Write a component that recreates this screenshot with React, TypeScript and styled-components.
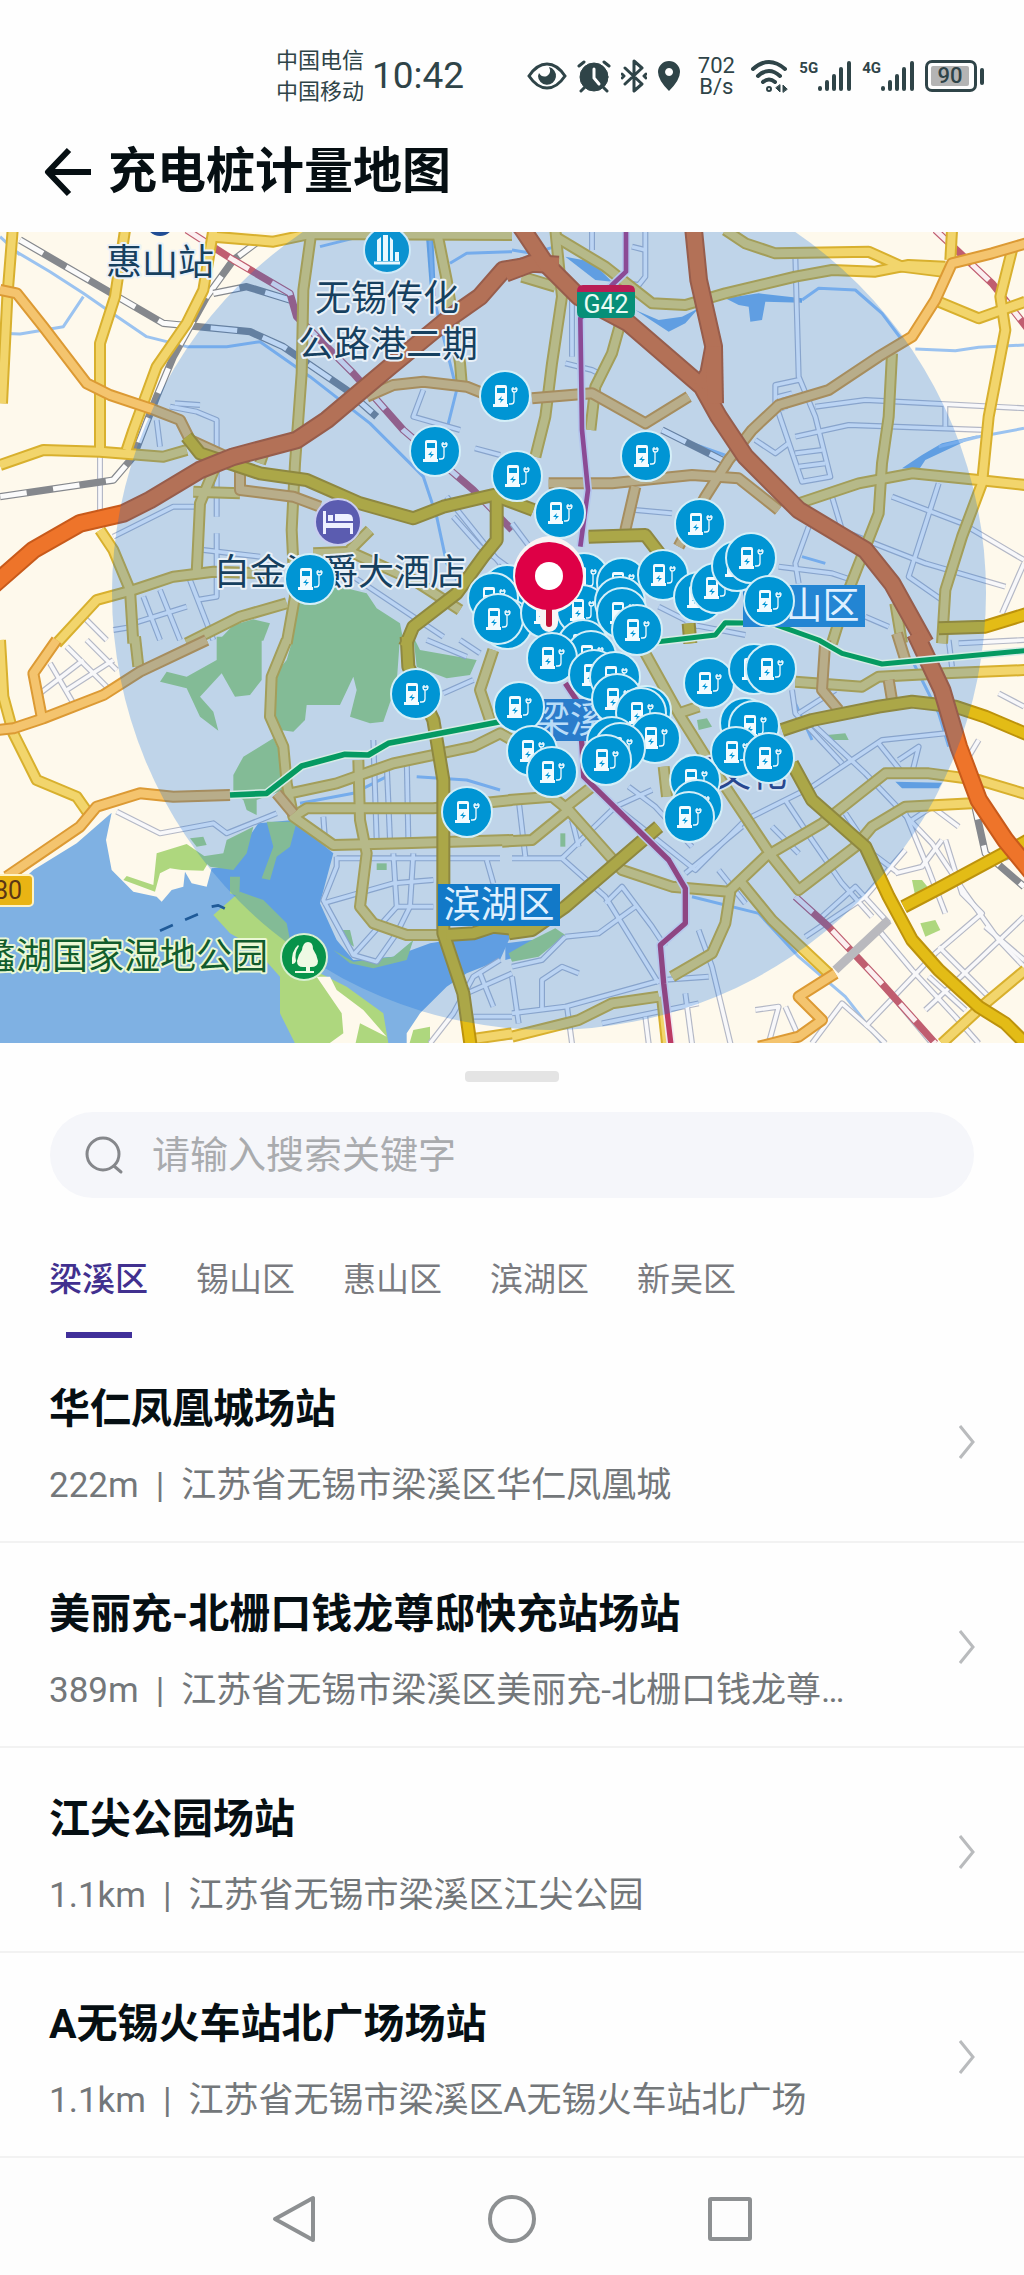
import React, { useState } from "react";
import styled, { createGlobalStyle } from "styled-components";

const cjk = `Roboto, "Noto Sans CJK SC", sans-serif`;

const GlobalStyle = createGlobalStyle`
  *, *::before, *::after { box-sizing: border-box; }
  body { margin: 0; background: #fefefe; font-family: ${cjk}; color: #060f13; }
  button, input { font: inherit; color: inherit; }
  button { border: 0; padding: 0; background: none; cursor: pointer; }
`;

/* ---------- layout ---------- */

const Page = styled.div`
  display: flex;
  flex-direction: column;
  min-height: 100vh;
`;

const StatusBar = styled.div`
  display: flex;
  align-items: center;
  height: 108px;
  padding: 44px 40px 0 276px;
  color: #2f4448;
`;

const Carriers = styled.div`
  font-size: 22px;
  line-height: 31px;
`;

const Clock = styled.time`
  margin-left: 8px;
  font-size: 37px;
  line-height: 64px;
`;

const StatusIcons = styled.div`
  display: flex;
  align-items: center;
  gap: 10px;
  margin-left: auto;

  svg { display: block; flex: none; }
`;

const Speed = styled.div`
  width: 50px;
  font-size: 22px;
  line-height: 21px;
  text-align: center;
`;

const Signal = styled.div`
  display: flex;
  align-items: flex-start;
  font-size: 15px;
  font-weight: 700;
  line-height: 16px;
`;

const Battery = styled.div`
  display: flex;
  align-items: center;
  gap: 3px;
`;

const BatteryBody = styled.div`
  width: 52px;
  height: 32px;
  padding: 3px;
  border: 3px solid #2f4448;
  border-radius: 7px;
`;

const BatteryLevel = styled.div`
  width: 38px;
  border-radius: 2px;
  background: #b4b4b4;
  font-size: 22px;
  font-weight: 500;
  line-height: 20px;
  text-align: center;
`;

const BatteryTip = styled.div`
  width: 4px;
  height: 17px;
  border-radius: 2px;
  background: #2f4448;
`;

const Header = styled.header`
  display: flex;
  align-items: center;
  gap: 16px;
  height: 124px;
  padding: 4px 44px 0;
`;

const BackButton = styled.button`
  display: flex;
`;

const PageTitle = styled.h1`
  margin: 0;
  font-size: 49px;
  font-weight: 700;
  line-height: 72px;
`;

const MapView = styled.div`
  svg { display: block; width: 100%; height: auto; }
`;

const Sheet = styled.main`
  display: flex;
  flex-direction: column;
`;

const Handle = styled.div`
  align-self: center;
  width: 94px;
  height: 11px;
  margin: 28px 0 30px;
  border-radius: 4px;
  background: #e4e4e4;
`;

const SearchBox = styled.label`
  display: flex;
  align-items: center;
  gap: 28px;
  height: 86px;
  margin: 0 50px;
  padding: 0 34px;
  border-radius: 43px;
  background: #f5f6fa;

  svg { flex: none; }
`;

const SearchInput = styled.input`
  flex: 1;
  min-width: 0;
  padding: 0;
  border: 0;
  outline: 0;
  background: none;
  font-size: 38px;
  line-height: 56px;

  &::placeholder { color: #a9abae; opacity: 1; }
`;

const Tabs = styled.div`
  display: flex;
  gap: 48px;
  padding: 54px 49px 0;
`;

const Tab = styled.button<{ $active: boolean }>`
  display: flex;
  flex-direction: column;
  align-items: center;
  gap: 24px;
  font-size: 33px;
  line-height: 56px;
  font-weight: ${(p) => (p.$active ? 500 : 400)};
  color: ${(p) => (p.$active ? "#41308f" : "#7a7b80")};

  &::after {
    content: "";
    width: 66px;
    height: 6px;
    background: ${(p) => (p.$active ? "#41309a" : "transparent")};
  }
`;

const StationList = styled.ul`
  margin: 0;
  padding: 0;
  list-style: none;
`;

const StationRow = styled.li`
  border-bottom: 2px solid #f2f2f2;
`;

const StationLink = styled.a`
  display: flex;
  align-items: center;
  justify-content: space-between;
  gap: 80px;
  padding: 29px 49px 25px;
  color: inherit;
  text-decoration: none;

  svg { flex: none; }
`;

const StationText = styled.div`
  min-width: 0;
  padding-top: 12px;
`;

const StationName = styled.h2`
  margin: 0 0 17px;
  font-size: 41px;
  font-weight: 700;
  line-height: 60px;
`;

const StationAddress = styled.p`
  margin: 0;
  overflow: hidden;
  white-space: nowrap;
  text-overflow: ellipsis;
  font-size: 35px;
  line-height: 60px;
  color: #73777a;
`;

const Divider = styled.span`
  padding: 0 17px;
`;

const SystemNav = styled.nav`
  display: flex;
  flex: 1;
  justify-content: center;
  gap: 168px;
  padding-top: 36px;
  background: #fdfdfd;
`;

const NavButton = styled.button`
  display: flex;
  height: 50px;
`;

/* ---------- map data: four tiles, each drawn on a 1536 x 1230 grid ---------- */

type Kind = "minor" | "local" | "avenue" | "main" | "highway";
type TileData = {
  x: number;
  y: number;
  lakes: string[];
  greens: string[];
  streams: string[];
  rails: string[];
  redRails: string[];
  roads: Record<Kind, string[]>;
};

const roadStyle: Record<Kind, { edge: string; fill: string; w: number; inner: number }> = {
  minor: { edge: "#b4b8c6", fill: "#f8f8fa", w: 18, inner: 11 },
  local: { edge: "#d8b02e", fill: "#f2d56c", w: 36, inner: 24 },
  avenue: { edge: "#dc9a34", fill: "#f4c46e", w: 36, inner: 24 },
  main: { edge: "#bd930c", fill: "#e3bc16", w: 42, inner: 30 },
  highway: { edge: "#c85a1b", fill: "#ee742a", w: 56, inner: 44 },
};
const roadOrder: Kind[] = ["minor", "local", "avenue", "main", "highway"];

const tiles: TileData[] = [
  {
    x: 0,
    y: 230,
    lakes: ["M1278 20 L1300 20 L1308 200 L1290 180Z"],
    greens: [
      "M655 1232 L700 1185 L760 1168 L810 1180 L790 1232Z",
      "M880 1130 L900 1090 L1000 1065 L1100 1090 L1130 1135 L1200 1180 L1210 1232 L870 1232Z",
    ],
    streams: [
      "M40 60 L150 125 L250 190 L330 245 L440 320 L560 350 L680 350 L780 335 L930 440 L1110 580 L1270 740 L1310 860 L1340 1000 L1370 1050",
      "M0 310 L60 312 L190 290 L250 200",
      "M960 50 L1080 20",
      "M1290 30 L1300 200 L1330 320 L1370 480 L1330 640",
      "M1350 100 L1400 70 L1536 65",
      "M0 20 L60 75",
    ],
    rails: [
      "M60 30 L490 280 L750 305 L850 350 L1040 480 L1130 560",
      "M780 30 L700 90 L620 200 L520 380 L470 500 L400 680 L340 750 L0 800",
      "M640 190 L740 170 L870 210",
    ],
    redRails: ["M560 0 L700 90 L870 190 L890 260 L1060 430 L1210 600 L1420 780 L1536 900"],
    roads: {
      minor: [
        "M300 680 L300 850", "M1270 480 L1240 560 L1380 600", "M510 530 L590 545 L650 570 L650 860",
        "M525 520 L600 525", "M470 570 L480 650", "M340 920 L520 830 L600 830", "M610 960 L780 980",
        "M570 1050 L640 1230", "M480 1080 L540 1230", "M430 1100 L480 1230", "M400 1180 L560 1130",
        "M1060 1040 L1330 1220", "M1340 800 L1500 1000", "M250 1160 L320 1230", "M1425 655 L1500 675",
        "M590 1110 L650 1100 L650 910", "M1360 860 L1440 950 L1536 1020", "M340 1200 L400 1190",
      ],
      local: [
        "M38 0 L22 200 L6 520", "M375 0 L345 200 L300 340 L300 660",
        "M640 0 L610 180 L560 280 L470 410 L400 600 L380 660", "M640 20 L820 35 L930 12 L1536 15",
        "M0 705 L130 660 L300 665 L490 680 L560 660",
        "M935 0 L910 180 L905 430 L885 700 L875 900 L885 1100 L860 1240",
        "M1310 0 L1340 150 L1380 400 L1385 460", "M300 900 L340 960 L390 1080 L400 1240",
        "M170 1240 L290 1110 L400 1080 L520 1040 L640 1025 L800 1030",
        "M650 700 L600 820 L590 1030", "M580 785 L720 790", "M560 1240 L720 1160 L860 1120",
        "M1050 960 L1110 900", "M1060 970 L1240 1050 L1380 1140", "M780 700 L800 640", "M940 970 L1060 965",
      ],
      avenue: [
        "M0 180 L50 190 L130 290 L260 460 L330 495 L450 535 L540 570 L570 630 L680 680",
        "M1100 500 L1180 465 L1270 455 L1400 470 L1450 490", "M720 700 L720 780 L880 800 L960 830",
      ],
      main: [
        "M560 620 L600 670 L780 730 L920 750 L1080 820 L1240 865 L1330 830 L1480 795 L1600 840",
        "M1490 800 L1490 930 L1450 980 L1370 1090 L1240 1190 L1215 1250",
      ],
      highway: [
        "M-20 1065 L100 960 L240 880 L370 850 L450 810 L600 720 L700 680 L890 630 L980 570 L1170 410 L1340 270 L1440 200 L1510 120 L1570 110",
      ],
    },
  },
  {
    x: 512,
    y: 230,
    lakes: [
      "M640 205 L740 190 L870 205 L870 218 L760 215 L750 270 L715 275 L710 230 L680 225Z",
      "M160 80 L240 95 L300 155 L250 150Z",
      "M370 240 L440 270 L510 260 L560 235 L520 280 L470 305Z",
      "M1170 715 L1230 675 L1290 640 L1400 615 L1240 690 L1220 720Z",
    ],
    greens: [],
    streams: [
      "M870 210 L920 175 L1030 180 L1110 250 L1170 330", "M1210 357 L1330 362 L1400 352 L1536 345",
      "M1280 650 L1400 620 L1536 595", "M0 60 L60 70 L130 50", "M870 980 L940 1000", "M540 640 L680 690",
    ],
    rails: ["M450 600 L660 705"],
    redRails: ["M1270 0 L1440 160 L1550 300"],
    roads: {
      minor: [
        "M850 80 L860 440 L910 560 L955 740 L870 755 L790 520 L790 465 L860 450",
        "M910 530 L1060 510 L1540 535", "M850 620 L1010 585 L1420 600", "M850 670 L930 660",
        "M860 710 L940 700", "M730 630 L790 670 L830 640", "M1140 800 L1350 880 L1536 990",
        "M1280 760 L1190 1040 L1290 1110", "M1010 910 L1240 1000 L1480 1070",
        "M890 890 L850 1000 L860 1060", "M370 840 L480 850", "M400 0 L400 140 L380 165 L350 160",
        "M160 400 L240 420 L280 440", "M1536 1000 L1470 1150", "M800 1010 L960 1030 L1020 1050",
        "M180 200 L180 380", "M1300 520 L1300 590", "M820 540 L800 500 L840 490", "M240 0 L240 60",
        "M360 50 L400 60", "M960 800 L990 900", "M1060 1160 L1130 1190", "M0 880 L60 960",
        "M440 1130 L560 1190", "M520 1180 L700 1215",
      ],
      local: [
        "M130 0 L150 200 L120 400 L100 560 L70 680",
        "M130 20 L280 110 L420 220 L520 225 L640 190 L850 140 L960 120 L1090 125 L1190 105 L1300 110",
        "M640 0 L700 40 L790 70 L1070 65 L1170 110 L1290 125", "M1320 0 L1315 90",
        "M1500 60 L1465 200 L1480 300 L1430 560 L1410 760 L1350 920 L1300 1080 L1290 1240",
        "M1280 215 L1400 265 L1540 215", "M1140 370 L1130 560 L1110 700 L1100 850 L1010 1080 L960 1240",
        "M860 820 L1040 760 L1200 730 L1400 750 L1540 765", "M325 280 L300 370 L250 470 L235 600",
        "M1150 1120 L1170 1240", "M30 140 L130 170",
      ],
      avenue: [
        "M1560 35 L1440 70 L1320 100 L1270 210 L1200 320 L1100 380 L950 480 L800 525 L720 600 L650 690 L580 800 L500 950",
        "M60 505 L240 490 L400 580 L530 500", "M110 760 L300 760 L540 735 L680 745 L800 840",
        "M370 770 L340 900",
      ],
      main: ["M230 920 L400 915 L450 980", "M1280 1195 L1420 1190 L1550 1150", "M530 1180 L535 1240"],
      highway: [
        "M-20 130 L60 100 L140 105",
        "M20 -20 L100 100 L200 200 L350 280 L570 470 L620 560 L700 680 L860 840 L1060 960 L1140 1060 L1240 1240",
        "M545 0 L560 150 L605 350 L590 430 L565 470", "M605 350 L608 520",
      ],
    },
  },
  {
    x: 0,
    y: 640,
    lakes: [
      "M-10 1240 L-10 790 L100 690 L230 610 L335 518 L318 600 L335 690 L400 755 L470 770 L485 785 L515 750 L550 740 L555 695 L575 730 L620 740 L635 685 L690 680 L740 600 L775 550 L880 540 L1000 640 L960 790 L1010 900 L1060 960 L1180 950 L1290 910 L1480 880 L1540 870 L1500 960 L1400 1000 L1340 1040 L1260 1120 L1220 1180 L1220 1240Z",
      "M1335 55 L1350 55 L1350 90 L1335 80Z",
    ],
    greens: [
      "M650 -10 L785 -10 L785 120 L750 165 L705 170 L665 100 L600 170 L640 215 L655 272 L600 230 L560 145 L480 125 L500 95 L560 110 L650 60Z",
      "M880 -10 L1200 -10 L1190 130 L1150 245 L1110 250 L1050 230 L1070 150 L1060 110 L1020 195 L920 195 L915 240 L880 275 L840 270 L800 230 L810 120 L860 60Z",
      "M700 405 L730 350 L820 295 L860 380 L850 450 L770 480 L770 525 L740 510 L730 480 L700 460Z",
      "M1240 -10 L1260 30 L1430 60 L1410 105 L1340 115 L1250 80Z",
      "M470 640 L560 612 L630 660 L610 692 L545 690 L510 685 L480 700 L465 755 L370 720 L380 708 L460 735Z",
      "M680 600 L760 560 L740 640 L700 690 L630 680 L600 650 L670 640Z",
      "M800 545 L890 545 L870 620 L830 650 L810 720 L785 715 L820 620Z",
      "M640 825 L720 755 L790 780 L860 850 L870 900 L960 1000 L1040 1040 L1150 1120 L1170 1240 L900 1240 L840 1120 L840 1010 L760 920 L690 880Z",
      "M690 710 L720 710 L718 770 L690 760Z",
      "M1020 870 L1050 870 L1062 920 L1030 900Z",
      "M1000 930 L1060 965 L1180 950 L1240 900 L1220 960 L1120 985 L1050 970Z",
      "M1220 1240 L1240 1170 L1290 1160 L1290 1240Z",
      "M1130 670 L1160 670 L1160 690 L1130 690Z",
      "M570 595 L610 590 L620 615 L590 620Z",
    ],
    streams: ["M900 490 L1060 460 L1160 410", "M1250 410 L1400 420 L1500 450"],
    rails: [],
    redRails: [],
    roads: {
      minor: [
        "M150 70 L220 190", "M200 20 L330 150", "M260 0 L350 90", "M120 160 L250 60", "M200 150 L340 60",
        "M350 515 L480 580 L640 550 L680 580 L830 520",
        "M1010 650 L1010 680 L970 780 L1060 945 L1130 965 L1190 880 L1230 800 L1240 640",
        "M970 790 L1180 730 L1300 720", "M1190 800 L1300 800", "M1060 945 L1190 800 L1180 640",
        "M1010 655 L1500 655", "M1160 370 L1170 600", "M1220 350 L1225 600", "M970 530 L975 600",
        "M1330 160 L1420 120", "M1400 1060 L1536 1000", "M1420 1130 L1536 1130",
        "M1290 1210 L1360 1120 L1420 1010 L1500 960", "M1460 660 L1480 730", "M1120 300 L1130 600",
        "M1440 1000 L1480 1100", "M1380 0 L1440 40", "M1400 1200 L1536 1190", "M1280 0 L1400 50",
      ],
      local: [
        "M0 0 L10 170 L40 280 L110 420 L230 470 L265 520", "M405 -10 L415 80",
        "M860 0 L815 110 L810 230 L850 320 L860 430 L880 530 L1000 615 L1210 610 L1540 600",
        "M870 460 L1010 430 L1180 370 L1420 320 L1500 280 L1536 300",
        "M880 530 L920 505 L1300 505 L1536 480",
        "M1075 360 L1080 540 L1100 640 L1080 800 L1120 850 L1220 885 L1370 885",
        "M1480 30 L1440 150 L1470 240", "M1400 1200 L1536 1180",
      ],
      avenue: [
        "M170 0 L100 100 L125 230", "M-10 270 L40 265 L130 235 L310 165 L420 95 L620 0",
        "M20 710 L240 560 L290 500 L420 460 L520 470 L690 465", "M830 460 L880 520",
      ],
      main: [
        "M1220 -10 L1225 80 L1300 240 L1330 420 L1330 880 L1390 1060 L1415 1240",
        "M1340 885 L1420 880 L1480 860 L1570 870",
      ],
      highway: [],
    },
  },
  {
    x: 512,
    y: 640,
    lakes: ["M-20 910 L60 900 L80 920 L20 950 L-20 960Z", "M1150 425 L1290 428 L1280 445 L1170 445Z"],
    greens: [
      "M60 900 L130 865 L160 885 L80 950 L0 965 L-10 940Z", "M555 240 L585 235 L600 260 L560 270Z",
      "M945 285 L1000 280 L1010 300 L960 300Z", "M1200 720 L1230 720 L1250 745 L1210 770Z",
      "M1225 850 L1270 840 L1285 870 L1240 890Z", "M145 580 L160 580 L160 620 L145 620Z",
    ],
    streams: ["M1200 60 L1280 220 L1310 320", "M540 770 L740 820 L860 950 L1000 1070 L1110 1210", "M850 190 L900 300"],
    rails: ["M1380 460 L1420 640 L1536 740"],
    redRails: ["M850 770 L950 860 L1100 1020 L1270 1210"],
    roads: {
      minor: [
        "M0 655 L150 655 L280 770 L440 1030", "M150 655 L310 500 L420 450",
        "M310 500 L550 690 L700 540 L900 440 L1110 300 L1300 280",
        "M280 790 L330 740 L420 860 L460 920", "M160 890 L260 880 L370 800", "M520 700 L690 560",
        "M560 870 L600 980 L660 1230", "M0 980 L90 960 L160 890", "M90 1110 L90 1020 L150 980 L200 1000",
        "M0 1120 L160 1100 L450 1020 L590 1010", "M0 1010 L20 1150", "M165 1100 L180 1210", "M270 1150 L560 1090",
        "M400 1130 L410 1210", "M520 1060 L540 1210", "M840 150 L850 220 L990 370",
        "M900 250 L1060 400 L1260 610 L1360 760 L1460 900 L1536 980",
        "M1160 360 L1220 320 L1200 400", "M1180 520 L1250 690 L1300 820", "M880 890 L1060 770 L1180 630",
        "M1300 600 L1350 760 L1410 820 L1270 940 L1060 1160", "M1440 1080 L1280 920", "M1536 830 L1400 960 L1240 1110",
        "M1340 560 L1260 500 L1200 540", "M1420 860 L1536 960", "M1100 870 L1200 990 L1330 1130 L1400 1210",
        "M900 1210 L990 1090 L1080 1170 L1120 1210", "M730 1110 L800 1100 L770 1210", "M820 1100 L860 1190",
        "M1250 1010 L1360 1110", "M1100 310 L1180 410", "M820 480 L900 600 L990 730 L1080 830", "M620 690 L700 790",
        "M540 620 L430 500 L350 440", "M1000 520 L1080 640 L1160 700", "M780 560 L860 640", "M700 540 L760 620",
        "M1150 700 L1230 680 L1290 600", "M20 480 L40 650", "M180 540 L200 620", "M1460 160 L1536 200",
        "M1400 300 L1370 350", "M860 220 L970 150", "M930 830 L1030 740 L1130 850", "M1160 1090 L1260 1210",
        "M1450 660 L1536 640", "M1310 0 L1320 80", "M1340 10 L1536 0",
      ],
      local: [
        "M850 125 L1050 140 L1100 110 L1300 100 L1540 90", "M-10 480 L120 470 L170 510 L60 600 L-30 605",
        "M170 510 L330 690 L480 740 L650 755 L760 650 L930 550 L1120 400 L1250 400 L1400 420 L1550 465",
        "M150 510 L240 440", "M400 40 L500 220 L600 380 L780 650 L860 750 L1030 620 L1080 560 L1180 500 L1380 490",
        "M690 730 L780 840 L950 1000", "M655 755 L640 850 L600 940 L480 1010",
        "M0 1190 L200 1140 L300 1090 L440 1070", "M450 1070 L465 1210", "M1540 990 L1420 1090 L1290 1210",
        "M500 220 L560 200", "M455 380 L465 470",
      ],
      avenue: [
        "M970 1000 L860 1070 L930 1140 L860 1190 L740 1220", "M940 0 L930 150 L980 210",
        "M1130 120 L1140 180", "M1155 -20 L1180 60",
      ],
      main: [
        "M810 270 L900 240 L1100 200 L1200 185 L1330 200 L1420 230 L1550 285",
        "M840 370 L900 480 L1060 620 L1130 770 L1200 900 L1280 990 L1400 1100 L1480 1150 L1550 1220",
        "M1175 800 L1290 740 L1550 600", "M-10 880 L60 870 L160 800 L440 560",
      ],
      highway: ["M1210 -20 L1290 150 L1340 320 L1400 480 L1480 600 L1570 710"],
    },
  },
];

/* Charging stations, in drawing order. */
const stations: [number, number][] = [
  [505, 396], [435, 451], [517, 476], [646, 456], [560, 513], [700, 524], [310, 579], [416, 694], [467, 812],
  [507, 590], [493, 598], [507, 624], [498, 619], [546, 613], [584, 578], [622, 583], [582, 610], [620, 602],
  [622, 613], [663, 575], [699, 597], [716, 588], [737, 566], [751, 558], [769, 601], [583, 645], [591, 656],
  [637, 630], [552, 658], [594, 675], [615, 677], [617, 699], [519, 707], [532, 751], [552, 772], [646, 711],
  [641, 713], [655, 738], [612, 742], [620, 748], [606, 760], [709, 683], [754, 669], [771, 669], [745, 723],
  [754, 726], [736, 752], [769, 758], [695, 780], [697, 805], [689, 817],
];

const metroNorth = "M342 0 V125 L300 165 L205 265 L210 600 L228 780 L205 950";
const metroSouth = "M160 130 L200 190 L210 320 L215 410 L470 660 L520 745 V850 L445 915 L455 1030 L480 1240";
const greenLineWest = "M690 465 L800 460 L905 378 L1035 343 L1105 345 L1165 310 L1500 245";
const greenLineEast = "M400 10 L610 -15 L640 -52 L780 -50 L920 0 L990 40 L1110 72 L1540 32";

const MapText = styled.text<{ $tone?: string; $halo?: string }>`
  font-family: ${cjk};
  font-size: 36px;
  fill: ${(p) => p.$tone ?? "#16405f"};
  stroke: ${(p) => p.$halo ?? "#e9f1f8"};
  stroke-width: 4px;
  stroke-linejoin: round;
  paint-order: stroke;
`;

const SignText = styled.text<{ $size: number; $tone: string }>`
  font-family: ${cjk};
  font-size: ${(p) => p.$size}px;
  fill: ${(p) => p.$tone};
`;

const onTile = (t: { x: number; y: number }) => `translate(${t.x} ${t.y}) scale(0.33334)`;

const StationMarker = ({ x, y }: { x: number; y: number }) => (
  <g transform={`translate(${x} ${y})`}>
    <circle r="25" fill="#0095d4" stroke="#d4eff8" strokeWidth="2" />
    <g fill="#f2fbff">
      <path fillRule="evenodd" d="M-10 -9 q0 -2 2 -2 h8 q2 0 2 2 v17 h1 v3 h-15 v-3 h2z M-8 -8 v5 h8 v-5z M-3 0 l-4 4 h3 l-1 3 l4 -4 h-3z" />
      <path d="M4 8 h2 q3 0 3 -3 v-9 M9 -4 q-2 0 -2 -3 h5 q0 3 -3 3 M8 -7 v-2 M11 -7 v-2" fill="none" stroke="#f2fbff" strokeWidth="1.300" />
    </g>
  </g>
);

const StationMap = () => (
  <svg viewBox="0 232 1024 811" role="img" aria-label="充电桩分布地图">
    <rect y="232" width="1024" height="811" fill="#fef9ec" />
    <g strokeLinejoin="round" fill="none">
      {tiles.map((t, i) => (
        <g key={i} transform={onTile(t)}>
          {t.lakes.map((d) => <path key={d} d={d} fill="#7fb1e3" />)}
          {t.greens.map((d) => <path key={d} d={d} fill="#aed77e" />)}
          {t.streams.map((d) => <path key={d} d={d} stroke="#9bc3f0" strokeWidth="9" />)}
        </g>
      ))}
      <g transform={onTile(tiles[2])}>
        <path d="M950 1010 L990 1010 L1010 1050 L1090 1110 L1160 1190 L1080 1150 L1060 1240 L960 1230 L1030 1180 L1025 1120Z" fill="#fef9ec" />
        <path d="M480 872 L595 822 M635 800 L655 796 L675 806" stroke="#1f5a98" strokeWidth="8" strokeDasharray="42 40" />
      </g>
      {tiles.map((t, i) => (
        <g key={i} transform={onTile(t)}>
          {t.roads.minor.map((d) => <path key={d} d={d} stroke={roadStyle.minor.edge} strokeWidth={roadStyle.minor.w} />)}
          {t.roads.minor.map((d) => <path key={d + "f"} d={d} stroke={roadStyle.minor.fill} strokeWidth={roadStyle.minor.inner} />)}
          {t.rails.map((d) => (
            <g key={d}>
              <path d={d} stroke="#85888d" strokeWidth="22" />
              <path d={d} stroke="#fbfbfb" strokeWidth="15" strokeDasharray="80 80" />
            </g>
          ))}
          {t.redRails.map((d) => (
            <g key={d}>
              <path d={d} stroke="#c05e70" strokeWidth="22" />
              <path d={d} stroke="#fbeff0" strokeWidth="15" strokeDasharray="70 80" />
            </g>
          ))}
        </g>
      ))}
      <path d="M1130 840 L970 990" transform={onTile(tiles[3])} stroke="#b9b9be" strokeWidth="26" />
      {roadOrder.slice(1).map((k) => (
        <g key={k}>
          {tiles.map((t, i) => (
            <g key={i} transform={onTile(t)}>
              {t.roads[k].map((d) => <path key={d} d={d} stroke={roadStyle[k].edge} strokeWidth={roadStyle[k].w} />)}
            </g>
          ))}
          {tiles.map((t, i) => (
            <g key={i} transform={onTile(t)}>
              {t.roads[k].map((d) => <path key={d} d={d} stroke={roadStyle[k].fill} strokeWidth={roadStyle[k].inner} />)}
            </g>
          ))}
        </g>
      ))}
      <g transform={onTile(tiles[1])}>
        <path d={metroNorth} stroke="#efe6f2" strokeWidth="24" />
        <path d={metroNorth} stroke="#b8407c" strokeWidth="14" />
      </g>
      <g transform={onTile(tiles[3])}>
        <path d={metroSouth} stroke="#f2e8f2" strokeWidth="26" />
        <path d={metroSouth} stroke="#bc3a64" strokeWidth="16" />
      </g>
    </g>

    <circle cx="549" cy="593" r="437" fill="#0269e1" fillOpacity="0.25" />

    <g fill="none" strokeLinejoin="round">
      <g transform={onTile(tiles[2])}>
        <path d={greenLineWest} stroke="#d6ebe6" strokeWidth="26" />
        <path d={greenLineWest} stroke="#059a62" strokeWidth="17" />
      </g>
      <g transform={onTile(tiles[3])}>
        <path d={greenLineEast} stroke="#d6ebe6" strokeWidth="24" />
        <path d={greenLineEast} stroke="#059a62" strokeWidth="15" />
      </g>
    </g>

    <rect x="438" y="884" width="122" height="42" fill="#1279c8" />
    <SignText x="499" y="918" textAnchor="middle" $size={37} $tone="#dff0ff">滨湖区</SignText>
    <rect x="743" y="585" width="122" height="42" fill="#2385d3" />
    <SignText x="804" y="619" textAnchor="middle" $size={37} $tone="#dff0ff">锡山区</SignText>
    <rect x="528" y="699" width="122" height="42" fill="#2a7ccb" />
    <SignText x="533" y="733" $size={37} $tone="#b9dcf8">梁溪区</SignText>

    <path d="M577 291 q0 -6 6 -6 h46 q6 0 6 6 v1 h-58z" fill="#b81d55" />
    <path d="M577 292 h58 v20 q0 6 -6 6 h-46 q-6 0 -6 -6z" fill="#078f78" />
    <SignText x="606" y="313" textAnchor="middle" $size={25} $tone="#e9fbf4">G42</SignText>
    <rect x="-20" y="875" width="53" height="31" rx="4" fill="#e9b414" stroke="#fff3c4" strokeWidth="2" />
    <SignText x="-6" y="899" $size={25} $tone="#5b3615">80</SignText>

    <circle cx="160" cy="222" r="14" fill="#214d94" />
    <MapText x="160" y="275" textAnchor="middle">惠山站</MapText>
    <g transform="translate(387 250)">
      <circle r="23" fill="#0b92d0" stroke="#cfe9f7" strokeWidth="2" />
      <path d="M-13 13 H13" stroke="#e9f8ff" strokeWidth="3" />
      <path d="M-10 11 V-10 L-6 -13 V11z M-4 11 V-15 H1 V11z M3 11 V-13 L6 -10 V11z M8 11 V2 H12 V11z" fill="#e9f8ff" />
    </g>
    <MapText x="387" y="311" textAnchor="middle">无锡传化</MapText>
    <MapText x="388" y="357" textAnchor="middle">公路港二期</MapText>
    <g transform="translate(338 522)">
      <circle r="23" fill="#5b5cb0" stroke="#c9cdf0" strokeWidth="2" />
      <path d="M-15 -11 h3 v12 h27 v11 h-3 v-6 h-24 v6 h-3z M-10 -7 h5 v6 h-5z M-3 -8 h13 q5 0 5 6 v1 h-18z" fill="#eef0ff" />
    </g>
    <MapText x="340" y="585" textAnchor="middle">白金汉爵大酒店</MapText>
    <MapText x="268" y="969" textAnchor="end" $tone="#115c2c" $halo="#eaf8d4">蠡湖国家湿地公园</MapText>
    <g transform="translate(304 957)">
      <circle r="23" fill="#07934a" stroke="#d7f0d0" strokeWidth="2" />
      <path d="M4 -15 q5 0 5 7 q4 6 5 12 q0 6 -7 6 h-1 v4 h4 v2 h-19 v-2 h11 v-4 h-3 q-6 0 -6 -6 q1 -6 5 -11 q1 -8 6 -8z M-6 -12 q-7 6 -6 19 q3 0 4 -3 q-2 -8 3 -15z" fill="#eefae4" />
    </g>
    <MapText x="679" y="787" $tone="#27478f" $halo="#d3e2f2">新文化</MapText>

    {stations.map(([x, y]) => <StationMarker key={`${x}-${y}`} x={x} y={y} />)}

    <path d="M549 536 a39 39 0 0 1 9 76 v11 a9 9 0 0 1 -18 0 v-11 a39 39 0 0 1 9 -76z" fill="#f8f4f4" />
    <path d="M549 605 V624" stroke="#c01036" strokeWidth="6" strokeLinecap="round" />
    <circle cx="549" cy="576" r="34" fill="#de0046" />
    <circle cx="549" cy="576" r="14" fill="#fff" />
  </svg>
);

/* ---------- icons ---------- */

const SignalBars = () => (
  <svg width="34" height="32" viewBox="0 0 34 32" stroke="#2f4448" strokeWidth="4" strokeLinecap="round">
    <path d="M2 28 v1 M9 22 v7 M16 16 v13 M23 9 v20 M31 3 v26" />
  </svg>
);

const StatusGlyphs = () => (
  <>
    <svg width="40" height="32" viewBox="0 0 40 32">
      <path d="M2 16 Q10 4 20 4 Q30 4 38 16 Q30 28 20 28 Q10 28 2 16z" fill="none" stroke="#2f4448" strokeWidth="3" />
      <path d="M22 7 a9 9 0 1 1 -11 9 l1 -3 q3 5 8 3 q5 -3 2 -9z" fill="#2f4448" />
    </svg>
    <svg width="34" height="34" viewBox="0 0 34 34" stroke="#2f4448" strokeLinecap="round">
      <circle cx="17" cy="18" r="14" fill="#2f4448" />
      <path d="M2 7 L7 3 M32 7 L27 3 M7 29 L4 32 M27 29 L30 32" strokeWidth="3" />
      <path d="M17 10 V19 L22 25" fill="none" stroke="#fff" strokeWidth="3" />
    </svg>
    <svg width="26" height="36" viewBox="0 0 26 36" fill="none" stroke="#2f4448" strokeWidth="3" strokeLinejoin="round" strokeLinecap="round">
      <path d="M4 10 L21 26 L13 33 V3 L21 10 L4 26 M1 16 L3 18 L1 20 M25 16 L23 18 L25 20" />
    </svg>
    <svg width="24" height="32" viewBox="0 0 24 32">
      <path fillRule="evenodd" d="M12 1 a11 11 0 0 1 11 11 q0 8 -11 19 q-11 -11 -11 -19 a11 11 0 0 1 11 -11z M12 8 a4 4 0 1 0 0.100 0z" fill="#2f4448" />
    </svg>
  </>
);

const WifiIcon = () => (
  <svg width="38" height="34" viewBox="0 0 38 34" fill="none" stroke="#2f4448" strokeWidth="4" strokeLinecap="round">
    <path d="M2 10 Q18 -4 34 10 M7 17 Q18 7 29 17 M12 23 Q18 18 24 23" />
    <circle cx="18" cy="30" r="1" />
    <path d="M29 26 v7 l-4 -4z M32 33 v-7 l4 4z" strokeWidth="1" fill="#2f4448" />
  </svg>
);

const Chevron = () => (
  <svg width="16" height="36" viewBox="0 0 16 36" fill="none" stroke="#b9bbbd" strokeWidth="3">
    <path d="M1 2 L14 18 L1 34" />
  </svg>
);

/* ---------- content ---------- */

const districts = ["梁溪区", "锡山区", "惠山区", "滨湖区", "新吴区"];

const nearby = [
  { name: "华仁凤凰城场站", distance: "222m", address: "江苏省无锡市梁溪区华仁凤凰城" },
  { name: "美丽充-北栅口钱龙尊邸快充站场站", distance: "389m", address: "江苏省无锡市梁溪区美丽充-北栅口钱龙尊邸快充站" },
  { name: "江尖公园场站", distance: "1.1km", address: "江苏省无锡市梁溪区江尖公园" },
  { name: "A无锡火车站北广场场站", distance: "1.1km", address: "江苏省无锡市梁溪区A无锡火车站北广场" },
];

export default function App() {
  const [district, setDistrict] = useState(districts[0]);

  return (
    <Page>
      <GlobalStyle />
      <StatusBar>
        <Carriers>
          <div>中国电信</div>
          <div>中国移动</div>
        </Carriers>
        <Clock>10:42</Clock>
        <StatusIcons>
          <StatusGlyphs />
          <Speed>702<br />B/s</Speed>
          <WifiIcon />
          <Signal>5G<SignalBars /></Signal>
          <Signal>4G<SignalBars /></Signal>
          <Battery>
            <BatteryBody><BatteryLevel>90</BatteryLevel></BatteryBody>
            <BatteryTip />
          </Battery>
        </StatusIcons>
      </StatusBar>

      <Header>
        <BackButton aria-label="返回">
          <svg width="48" height="50" viewBox="0 0 48 50" fill="none" stroke="#060f13" strokeWidth="6" strokeLinejoin="round">
            <path d="M25 3 L4 25 L25 47 M4 25 H47" />
          </svg>
        </BackButton>
        <PageTitle>充电桩计量地图</PageTitle>
      </Header>

      <MapView><StationMap /></MapView>

      <Sheet>
        <Handle />
        <SearchBox>
          <svg width="40" height="40" viewBox="0 0 40 40" fill="none" stroke="#85878b" strokeWidth="3" strokeLinecap="round">
            <circle cx="19" cy="19" r="16" />
            <path d="M30 31 L37 37" />
          </svg>
          <SearchInput type="search" aria-label="搜索" placeholder="请输入搜索关键字" />
        </SearchBox>

        <Tabs role="tablist">
          {districts.map((d) => (
            <Tab key={d} role="tab" aria-selected={d === district} $active={d === district} onClick={() => setDistrict(d)}>
              {d}
            </Tab>
          ))}
        </Tabs>

        <StationList>
          {nearby.map((s) => (
            <StationRow key={s.name}>
              <StationLink href="#">
                <StationText>
                  <StationName>{s.name}</StationName>
                  <StationAddress>
                    {s.distance}<Divider>|</Divider>{s.address}
                  </StationAddress>
                </StationText>
                <Chevron />
              </StationLink>
            </StationRow>
          ))}
        </StationList>
      </Sheet>

      <SystemNav aria-label="系统导航">
        <NavButton aria-label="返回上一页">
          <svg width="50" height="50" viewBox="0 0 50 50" fill="none" stroke="#8d9092" strokeWidth="4" strokeLinejoin="round">
            <path d="M6 25 L44 4 V46z" />
          </svg>
        </NavButton>
        <NavButton aria-label="主页">
          <svg width="50" height="50" viewBox="0 0 50 50" fill="none" stroke="#8d9092" strokeWidth="4">
            <circle cx="25" cy="25" r="22" />
          </svg>
        </NavButton>
        <NavButton aria-label="最近任务">
          <svg width="50" height="50" viewBox="0 0 50 50" fill="none" stroke="#8d9092" strokeWidth="4" strokeLinejoin="round">
            <rect x="5" y="5" width="40" height="40" rx="1" />
          </svg>
        </NavButton>
      </SystemNav>
    </Page>
  );
}
